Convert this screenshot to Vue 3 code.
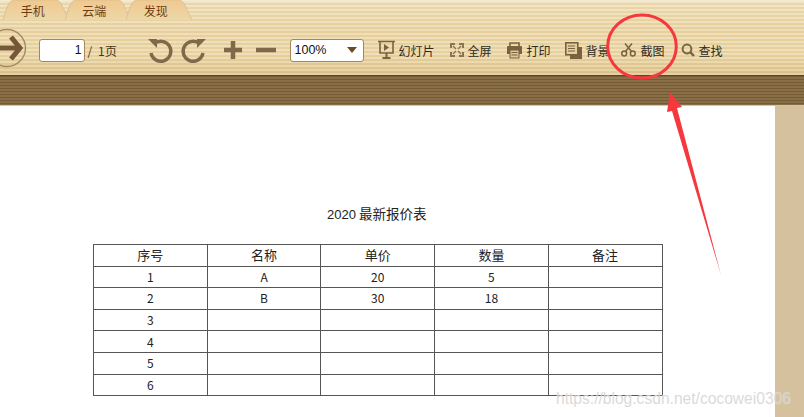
<script setup>
const tabs = ['手机', '云端', '发现']
const headers = ['序号', '名称', '单价', '数量', '备注']
const rows = [
  ['1', 'A', '20', '5', ''],
  ['2', 'B', '30', '18', ''],
  ['3', '', '', '', ''],
  ['4', '', '', '', ''],
  ['5', '', '', '', ''],
  ['6', '', '', '', ''],
]
</script>

<template>
  <div class="app">
    <header class="toolbar">
      <nav class="tabs">
        <div v-for="t in tabs" :key="t" class="tab">
          <svg class="tab-bg" width="70" height="21" viewBox="0 0 70 21">
            <defs>
              <linearGradient id="tabg" x1="0" y1="0" x2="0" y2="1">
                <stop offset="0" stop-color="#f1c88f" />
                <stop offset="1" stop-color="#ecd8a8" />
              </linearGradient>
            </defs>
            <path d="M1 20 C5 8 6 0 13 0 H53 C60 0 60 8 67 20" fill="url(#tabg)" stroke="#dcc194" />
          </svg>
          <span>{{ t }}</span>
        </div>
      </nav>
      <div class="tools">
        <svg class="go" width="40" height="40" viewBox="0 0 40 40">
          <circle cx="20" cy="18" r="18.5" fill="none" stroke="#a08a64" stroke-width="1.4" />
          <path d="M0 18 H31 M24 7 L33 18 L24 29" fill="none" stroke="#75583a" stroke-width="5" />
        </svg>
        <div class="page-input">1</div>
        <span class="page-count">/ 1页</span>
        <svg class="ic undo" width="26" height="26" viewBox="0 0 26 26">
          <path d="M7 7 A10 10 0 1 1 4 16" fill="none" stroke="#80694a" stroke-width="3.4" />
          <path d="M1 2 H10 V11 Z" fill="#80694a" />
        </svg>
        <svg class="ic redo" width="26" height="26" viewBox="0 0 26 26">
          <path d="M19 7 A10 10 0 1 0 22 16" fill="none" stroke="#80694a" stroke-width="3.4" />
          <path d="M25 2 H16 V11 Z" fill="#80694a" />
        </svg>
        <svg class="ic plus" width="20" height="20" viewBox="0 0 20 20">
          <path d="M10 1 V19 M1 10 H19" stroke="#80694a" stroke-width="4.5" />
        </svg>
        <svg class="ic minus" width="20" height="20" viewBox="0 0 20 20">
          <path d="M0 10 H20" stroke="#80694a" stroke-width="4.5" />
        </svg>
        <div class="zoom-select">
          <span>100%</span>
          <i class="caret"></i>
        </div>
        <button class="act slides">
          <svg width="17" height="20" viewBox="0 0 17 20">
            <path d="M0 1.5 H17 M2 2 V13 H15 V2" fill="none" stroke="#7a6140" stroke-width="1.6" />
            <path d="M6 4 L11 7.5 L6 11 Z" fill="#7a6140" />
            <path d="M8.5 13 V17 M4.5 18 H12.5" stroke="#7a6140" stroke-width="2" />
          </svg>
          <span>幻灯片</span>
        </button>
        <button class="act full">
          <svg width="14" height="14" viewBox="0 0 14 14">
            <path d="M0 0 H5 V2 H2 V5 H0 Z M14 0 H9 V2 H12 V5 H14 Z M0 14 H5 V12 H2 V9 H0 Z M14 14 H9 V12 H12 V9 H14 Z" fill="#8a7350" />
            <path d="M3 3 L6 6 M11 3 L8 6 M3 11 L6 8 M11 11 L8 8" stroke="#8a7350" stroke-width="1.4" />
          </svg>
          <span>全屏</span>
        </button>
        <button class="act print">
          <svg width="17" height="17" viewBox="0 0 17 17">
            <path d="M4 4 V1 H13 V4" fill="none" stroke="#7a6140" stroke-width="1.6" />
            <path d="M3 12 H1 V5 Q1 4 2 4 H15 Q16 4 16 5 V12 H14" fill="#7a6140" />
            <rect x="4" y="8" width="9" height="8" fill="#e0c695" stroke="#7a6140" />
            <path d="M5.5 10.5 H11.5 M5.5 13 H11.5" stroke="#7a6140" />
          </svg>
          <span>打印</span>
        </button>
        <button class="act bg">
          <svg width="17" height="17" viewBox="0 0 17 17">
            <rect x="5" y="5" width="12" height="12" fill="#7a6140" />
            <rect x="0.8" y="0.8" width="12" height="12" fill="#e5cf9f" stroke="#7a6140" stroke-width="1.6" />
            <path d="M3 4 H10 M3 6.5 H10 M3 9 H10" stroke="#7a6140" />
          </svg>
          <span>背景</span>
        </button>
        <button class="act cut">
          <svg width="15" height="14" viewBox="0 0 15 14">
            <circle cx="3.2" cy="10.5" r="2.4" fill="none" stroke="#7a6140" stroke-width="1.5" />
            <circle cx="11.8" cy="10.5" r="2.4" fill="none" stroke="#7a6140" stroke-width="1.5" />
            <path d="M4.5 8.5 L11 0.5 M10.5 8.5 L4 0.5" stroke="#7a6140" stroke-width="1.5" />
          </svg>
          <span>截图</span>
        </button>
        <button class="act find">
          <svg width="14" height="14" viewBox="0 0 14 14">
            <circle cx="6" cy="6" r="4.4" fill="none" stroke="#7a6140" stroke-width="2" />
            <path d="M9.2 9.2 L13 13" stroke="#7a6140" stroke-width="2.4" />
          </svg>
          <span>查找</span>
        </button>
      </div>
    </header>
    <div class="band"></div>
    <main class="viewer">
      <section class="page">
        <h1 class="title"><span class="num">2020</span> 最新报价表</h1>
        <table class="sheet">
          <thead>
            <tr><th v-for="h in headers" :key="h">{{ h }}</th></tr>
          </thead>
          <tbody>
            <tr v-for="r in rows" :key="r[0]">
              <td v-for="(c, i) in r" :key="i">{{ c }}</td>
            </tr>
          </tbody>
        </table>
      </section>
      <aside class="gutter"></aside>
    </main>
    <svg class="marks" width="804" height="417" viewBox="0 0 804 417">
      <ellipse cx="642" cy="46.5" rx="34.3" ry="31.5" fill="none" stroke="#f5383e" stroke-width="3" />
      <path d="M670 92 L682 107 L677 108 L721 275 L672 111 L667 112 Z" fill="#f5383e" />
    </svg>
    <div class="watermark">https://blog.csdn.net/cocowei0306</div>
  </div>
</template>

<style>
html, body { margin: 0; padding: 0; background: #fff; overflow: hidden; }
</style>

<style scoped>
.app {
  position: relative;
  width: 804px;
  height: 417px;
  overflow: hidden;
  font-family: "Noto Sans CJK SC", "Liberation Sans", sans-serif;
  font-size: 12px;
  color: #222;
}
.toolbar {
  height: 75px;
  box-sizing: border-box;
  background:
    repeating-linear-gradient(180deg, rgba(255,255,255,.2) 0 2px, rgba(160,110,40,.07) 2px 4px),
    linear-gradient(180deg, #efdfb5 0%, #ebd6a5 40%, #ecd8a8 70%, #dfc48b 100%);
  border-top: 1px solid #f4ecd2;
}
.tabs {
  display: flex;
  height: 20px;
  padding-left: 2px;
}
.tab {
  position: relative;
  width: 61.5px;
  height: 20px;
  display: flex;
  align-items: center;
  justify-content: center;
  color: #6f3c12;
  font-size: 12px;
}
.tab span { position: relative; top: -1px; }
.tab-bg { position: absolute; left: 0; top: -1px; }
.tools {
  display: flex;
  align-items: center;
  height: 38px;
  margin-top: 10px;
}
.go { margin-right: 11.5px; margin-left: -13px; flex: none; overflow: visible; }
.page-input {
  width: 46px;
  height: 23px;
  box-sizing: border-box;
  background: #fff;
  border: 1px solid #a5885a;
  border-radius: 3px;
  text-align: right;
  line-height: 21px;
  padding-right: 2px;
  color: #111;
  font-family: "Liberation Sans", sans-serif;
  font-size: 12px;
}
.page-count {
  width: 28px;
  margin-left: 3px;
  margin-right: 31px;
  color: #4a3416;
  white-space: nowrap;
  word-spacing: 2px;
  letter-spacing: 0.5px;
}
.ic { flex: none; overflow: visible; }
.undo { margin-right: 8px; }
.redo { margin-right: 16px; }
.plus { margin-right: 13px; }
.minus { margin-right: 14px; }
.zoom-select {
  width: 74px;
  height: 23px;
  box-sizing: border-box;
  background: #fff;
  border: 1px solid #a5885a;
  border-radius: 3px;
  display: flex;
  align-items: center;
  justify-content: space-between;
  padding: 0 6px 0 4px;
  color: #111;
  font-family: "Liberation Sans", sans-serif;
  font-size: 12.5px;
  margin-right: 14px;
}
.caret {
  width: 0;
  height: 0;
  border: 5px solid transparent;
  border-top: 6px solid #6b4c22;
  border-bottom: 0;
}
.act {
  display: flex;
  align-items: center;
  gap: 4px;
  padding: 0;
  border: 0;
  background: none;
  font: inherit;
  color: #2f2a20;
  white-space: nowrap;
}
.act svg { flex: none; }
.slides { margin-right: 15px; }
.full { margin-right: 14px; }
.print { margin-right: 14px; }
.bg { margin-right: 11px; }
.cut { margin-right: 16px; gap: 5px; }
.band {
  height: 31px;
  box-sizing: border-box;
  background:
    repeating-linear-gradient(180deg, rgba(60,35,10,.2) 0 1px, rgba(255,240,200,.05) 1px 3px),
    #836840;
  border-top: 1px solid #5f4526;
  border-bottom: 1px solid #d9c59a;
}
.viewer {
  display: flex;
  height: 311px;
}
.page {
  width: 775px;
  background: #fff;
  padding-top: 98px;
  box-sizing: border-box;
}
.gutter {
  flex: 1;
  background: #d5c19d;
}
.title {
  margin: 0 0 20px 327px;
  font-size: 13.5px;
  font-weight: 400;
  line-height: 18px;
  color: #222;
  white-space: nowrap;
}
.num { font-family: "Liberation Sans", sans-serif; font-size: 13px; }
.sheet {
  margin-left: 93px;
  width: 569.5px;
  border-collapse: collapse;
  table-layout: fixed;
  font-size: 13px;
  color: #222;
}
.sheet th, .sheet td {
  border: 1px solid #555;
  height: 20.6px;
  padding: 0;
  text-align: center;
  font-weight: 400;
  line-height: 16px;
}
.sheet td { font-size: 12px; }
.marks { position: absolute; left: 0; top: 0; pointer-events: none; }
.watermark {
  position: absolute;
  left: 556px;
  top: 389px;
  font-family: "Liberation Sans", sans-serif;
  font-size: 15.6px;
  line-height: 20px;
  color: rgba(205, 205, 205, .75);
  text-shadow: 0 0 1px rgba(255,255,255,.6);
  white-space: nowrap;
}
</style>
